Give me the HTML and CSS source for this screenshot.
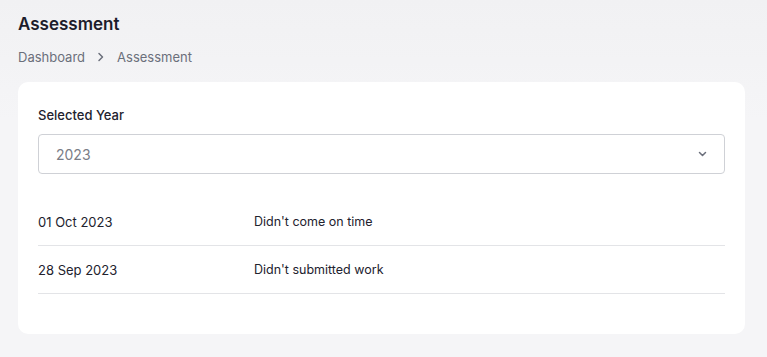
FILE: index.html
```html
<!DOCTYPE html>
<html lang="en">
<head>
    <meta charset="UTF-8">
    <meta name="viewport" content="width=device-width, initial-scale=1.0">
    <title>Assessment</title>
    <link rel="stylesheet" href="styles.css">
</head>
<body>
    <div class="page">
        <h1 class="page-title">Assessment</h1>
        <div class="breadcrumb">
            <span>Dashboard</span>
            <svg class="crumb-sep" width="8" height="10" viewBox="0 0 8 10"><path d="M2 1.5 L5.5 5 L2 8.5" fill="none" stroke="#6b6f7b" stroke-width="1.5" stroke-linecap="round" stroke-linejoin="round"/></svg>
            <span>Assessment</span>
        </div>

        <div class="card">
            <label class="field-label">Selected Year</label>
            <div class="select">
                <span>2023</span>
                <svg width="9" height="6" viewBox="0 0 9 6"><path d="M1.5 1.5 L4.5 4.5 L7.5 1.5" fill="none" stroke="#6b6f7b" stroke-width="1.5" stroke-linecap="round" stroke-linejoin="round"/></svg>
            </div>

            <div class="list">
                <div class="row">
                    <span class="date">01 Oct 2023</span>
                    <span class="note">Didn't come on time</span>
                </div>
                <div class="row">
                    <span class="date">28 Sep 2023</span>
                    <span class="note">Didn't submitted work</span>
                </div>
            </div>
        </div>
    </div>
</body>
</html>
```

FILE: styles.css
```css
body {
    margin: 0;
    font-family: Inter, "Open Sans", sans-serif;
    background: linear-gradient(#f1f1f3, #f5f5f7 120px);
    color: #22222e;
}
.page {
    padding: 14px 22px 24px 18px;
}
.page-title {
    font-size: 17px;
    font-weight: 600;
    margin: 0;
    color: #1c1c2b;
}
.breadcrumb {
    display: flex;
    align-items: center;
    gap: 11px;
    margin-top: 15px;
    font-size: 13px;
    color: #6b6f7b;
}
.crumb-sep {
    margin: 0 1px;
}
.card {
    background: #fff;
    border-radius: 10px;
    margin-top: 17px;
    padding: 25px 20px 40px 20px;
}
.field-label {
    display: block;
    font-size: 13px;
    font-weight: 500;
    color: #22222e;
}
.select {
    display: flex;
    align-items: center;
    justify-content: space-between;
    height: 38px;
    margin-top: 11px;
    padding: 0 17px;
    border: 1px solid #cfd1d6;
    border-radius: 4px;
    font-size: 14px;
    color: #7a7d87;
}
.list {
    margin-top: 24px;
}
.row {
    display: flex;
    align-items: center;
    height: 47px;
    border-bottom: 1px solid #e3e4e7;
}
.date {
    width: 216px;
    font-size: 13px;
}
.note {
    font-size: 12.5px;
}
```
